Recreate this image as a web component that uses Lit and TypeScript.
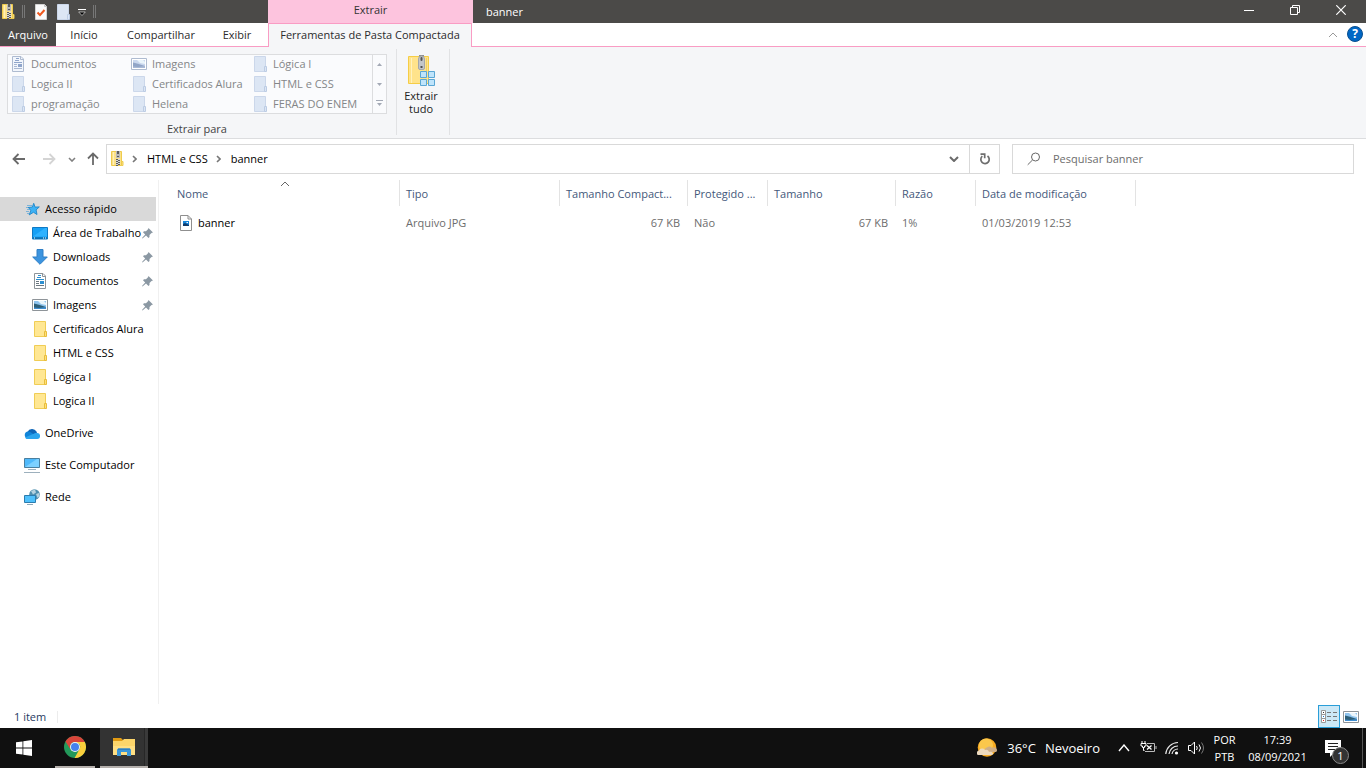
import { LitElement, html, css, svg, nothing, type TemplateResult } from "lit";
import { customElement } from "lit/decorators.js";
import { classMap } from "lit/directives/class-map.js";

/* ---------- icons ---------- */

const zipIcon = html`<svg width="14" height="18" viewBox="0 0 14 18" aria-hidden="true">
  <path d="M1.5 1.5h10v14h-10z" fill="#fbe189" stroke="#eecb4d" />
  <path d="M11.500 11.500h1.500v4h-1.500z" fill="#fbe189" stroke="#eecb4d" />
  <path d="M3.500 2v13" stroke="#fff0b8" />
  <path d="M6 1h4v7H6z" fill="#b9b9b9" />
  <path d="M7 1h2v3H7zM7 6h2v1H7z" fill="#5c5c5c" />
  <path d="M6 9h2v1H6zM8 10h2v1H8zM6 11h2v1H6zM8 12h2v1H8zM6 13h2v1H6zM8 14h2v1H8zM6 15h2v1H6z" fill="#5d5d5d" />
  <path d="M8 9h2v1H8zM6 10h2v1H6zM8 11h2v1H8zM6 12h2v1H6zM8 13h2v1H8zM6 14h2v1H6z" fill="#d8d8d8" />
</svg>`;

const bigZipIcon = html`<svg width="30" height="34" viewBox="0 0 30 34" aria-hidden="true">
  <path d="M2.500 2.500h20v27h-20z" fill="#ffe38b" stroke="#f5cd46" />
  <path d="M5.500 4v25" stroke="#fff2bf" stroke-width="1" />
  <path d="M20.500 4v14" stroke="#f3d064" stroke-width="1" />
  <path d="M13 1h5v3h-5z" fill="#8d8d8d" />
  <path d="M12.500 5a3 3 0 0 1 6 0v9a1.500 1.500 0 0 1-1.500 1.500h-3a1.500 1.500 0 0 1-1.500-1.500z" fill="#c4c6c8" stroke="#a4a7aa" />
  <rect x="14.500" y="3" width="2" height="4" rx="1" fill="#555" />
  <path d="M14.500 12h2v2h-2z" fill="#505050" />
  <g fill="#bfe4fb" stroke="#5ba7d4">
    <path d="M14.500 17.500h6v6h-6zM22.500 17.500h6v6h-6zM14.500 25.500h6v6h-6zM22.500 25.500h6v6h-6z" />
  </g>
</svg>`;

const folderIcon = (faded = false) => html`<svg width="16" height="16" viewBox="0 0 16 16" aria-hidden="true">
  <path d="M2.500 .500h11v15h-11z" fill=${faded ? "#dce6f4" : "#ffe793"} stroke=${faded ? "#cbd7ea" : "#f0cd55"} />
  <path d="M12.500 10.500h2v5h-2z" fill=${faded ? "#dce6f4" : "#ffe07a"} stroke=${faded ? "#bccce4" : "#e8bd3c"} />
</svg>`;

const documentIcon = (faded = false) => {
  const line = faded ? "#a9b8d2" : "#6b7780";
  const accent = faded ? "#8fa5cb" : "#2c8fd0";
  return html`<svg width="16" height="16" viewBox="0 0 16 16" aria-hidden="true">
    <path d="M2.500 .500h8.500l2.500 2.500v12.500h-11z" fill=${faded ? "#f2f6fc" : "#fff"} stroke=${faded ? "#aebbd0" : "#8e9499"} />
    <path d="M10.500 .500v3h3" fill="none" stroke=${faded ? "#aebbd0" : "#8e9499"} />
    <path d="M6 2.500h3M5 4.500h4M4 6.500h8" stroke=${accent} />
    <path d="M4 8.500h3M4 10.500h3M4 12.500h8" stroke=${line} />
    <path d="M8 8h4v3H8z" fill=${accent} />
  </svg>`;
};

const pictureIcon = (faded = false) => html`<svg width="16" height="12" viewBox="0 0 16 12" aria-hidden="true">
  <path d="M.500 .500h15v11H.500z" fill="#fff" stroke=${faded ? "#aebbd0" : "#8e9499"} />
  <path d="M2 2h12v8H2z" fill=${faded ? "#c9d7ee" : "#8fc4ee"} />
  <path d="M6 2h6l2 2v2l-5-1z" fill="#eaf5fc" />
  <path d="M2 4.500l4 1 8 2.500v2H2z" fill=${faded ? "#91a5c7" : "#2d5f78"} />
  <path d="M2 8.500l5 .500 7-1V10H2z" fill=${faded ? "#a9bad7" : "#3f8dd0"} />
</svg>`;

const taskCheckIcon = html`<svg width="13" height="16" viewBox="0 0 13 16" aria-hidden="true">
  <path d="M.500 .500h9l2 2v13H.500z" fill="#fbfbfb" stroke="#d3d3d3" />
  <path d="M9.500 .500v2h2" fill="#e3e3e3" stroke="#c2c2c2" />
  <path d="M2.500 8.500l2.500 2.500L9.500 6" fill="none" stroke="#f0591f" stroke-width="2" />
</svg>`;

const starIcon = html`<svg width="16" height="16" viewBox="0 0 16 16" aria-hidden="true">
  <path d="M3 4.500h5M2 6.500h4M3 8.500h3M2 10.500h3M3 12.500h2" stroke="#7cb3d9" />
  <path d="M9.700 2.300l1.400 3.800 4.200-.200-3.200 3 .9 4.600-3.500-2.200-4.300 2.600 1.700-4.700-2.700-2.700 4.200-.500z" fill="#3db2f5" stroke="#1f86c8" stroke-width=".9" />
</svg>`;

const desktopIcon = html`<svg width="16" height="13" viewBox="0 0 16 13" aria-hidden="true">
  <path d="M.500 .500h15v11.500H.500z" fill="#16a0f5" stroke="#0f79c4" />
  <path d="M1 9.500L13 1h2v8.500z" fill="#2fb2ff" />
  <path d="M1 11h14" stroke="#07588f" />
  <path d="M2 11h1M11 11h1M13 11h1" stroke="#fff" />
</svg>`;

const downloadIcon = html`<svg width="16" height="16" viewBox="0 0 16 16" aria-hidden="true">
  <path d="M5 .500h6v7.500h4.300L8 15.300.700 8H5z" fill="#3c94df" stroke="#2f7fc6" />
</svg>`;

const pinIcon = html`<svg class="pin" width="11" height="11" viewBox="0 0 11 11" aria-hidden="true">
  <path d="M6.500 0L11 4.500l-1.500.500L7.500 7v2l-1 1L4 7.500.500 10.500 0 10l3.200-3.500L1 4.300l1-1h2l2-2z" fill="#8b98a3" />
</svg>`;

const cloudIcon = html`<svg width="16" height="11" viewBox="0 0 16 11" aria-hidden="true">
  <path d="M3.500 4a5 5 0 0 1 9-.500l1 3-9 3z" fill="#0f66b8" />
  <path d="M3.500 10.500a3.600 3.600 0 0 1 0-7c1.500 0 2.500.4 3.500 1L14 9z" fill="#1184d8" />
  <path d="M3 11h10a3 3 0 0 0 .2-6C11.500 4.600 10.500 5.300 9 6L1 9.500c.5.900 1.200 1.500 2 1.500z" fill="#2ba5ee" />
</svg>`;

const computerIcon = html`<svg width="16" height="16" viewBox="0 0 16 16" aria-hidden="true">
  <path d="M.500 1.500h15v9H.500z" fill="#4fb9fb" stroke="#4a7f9f" />
  <path d="M1 10L13 2h2v8z" fill="#7cd0ff" />
  <path d="M4 12.500h8M0 15.500h16" stroke="#9db0bd" />
</svg>`;

const networkIcon = html`<svg width="16" height="16" viewBox="0 0 16 16" aria-hidden="true">
  <circle cx="10.500" cy="5.500" r="5.300" fill="#4f8fae" />
  <path d="M7 2l4-1.500 1 3-3 2zM12 5l3-1 .5 3-2 2z" fill="#b5d2df" />
  <path d="M.500 6.500h11v7H.500z" fill="#4fc0fb" stroke="#2c7cae" />
  <path d="M3 15.500h6" stroke="#8fa9b8" />
</svg>`;

const jpgIcon = html`<svg width="12" height="16" viewBox="0 0 12 16" aria-hidden="true">
  <path d="M.500 .500h7.500l3.500 3.500v11.500H.500z" fill="#fff" stroke="#8f8f8f" />
  <path d="M8 .500V4h3.500" fill="none" stroke="#8f8f8f" />
  <path d="M3 6h6v5H3z" fill="#1583d8" />
  <path d="M3 11V9l2-1 4 2v1z" fill="#123c6b" />
  <path d="M6.500 7h1.500v1H6.500z" fill="#fff" />
</svg>`;

const chevron = (dir: "up" | "down" | "right", w: number, h: number, color: string, stroke = 1) => {
  const d =
    dir === "up" ? `M1 ${h - 1}L${w / 2} 1L${w - 1} ${h - 1}`
    : dir === "down" ? `M1 1L${w / 2} ${h - 1}L${w - 1} 1`
    : `M1 1L${w - 1} ${h / 2}L1 ${h - 1}`;
  return html`<svg width=${w} height=${h} viewBox="0 0 ${w} ${h}" aria-hidden="true">
    <path d=${d} fill="none" stroke=${color} stroke-width=${stroke} />
  </svg>`;
};

const arrow = (color: string, turn: number) => html`<svg width="14" height="14" viewBox="0 0 14 14" aria-hidden="true">
  <path d="M13 7H1.500M6.500 2L1.500 7l5 5" fill="none" stroke=${color} stroke-width="1.800" transform="rotate(${turn} 7 7)" />
</svg>`;

const refreshIcon = html`<svg width="12" height="12" viewBox="0 0 12 12" aria-hidden="true">
  <path d="M8.500 3A4.200 4.200 0 1 1 3.300 3.200" fill="none" stroke="#6e6e6e" stroke-width="1.700" />
  <path d="M1.500 1.200h4.200v4" fill="none" stroke="#6e6e6e" stroke-width="1.700" />
</svg>`;

const searchIcon = html`<svg width="14" height="14" viewBox="0 0 14 14" aria-hidden="true">
  <circle cx="8.500" cy="5" r="4" fill="none" stroke="#666" />
  <path d="M5.500 8L.700 12.800" stroke="#666" />
</svg>`;

const minimizeIcon = html`<svg width="10" height="10" viewBox="0 0 10 10" aria-hidden="true"><path d="M0 5.500h10" stroke="#fff" /></svg>`;
const restoreIcon = html`<svg width="10" height="10" viewBox="0 0 10 10" aria-hidden="true">
  <path d="M.500 2.500h7v7h-7zM2.500 2.500v-2h7v7h-2" fill="none" stroke="#fff" />
</svg>`;
const closeIcon = html`<svg width="10" height="10" viewBox="0 0 10 10" aria-hidden="true"><path d="M.300 .300l9.400 9.400M9.700 .300L.300 9.700" stroke="#fff" stroke-width="1.200" /></svg>`;

const windowsIcon = html`<svg width="16" height="16" viewBox="0 0 16 16" aria-hidden="true">
  <path d="M0 2.300L6.500 1.400v6.200H0zM7.300 1.300L16 0v7.600H7.300zM0 8.400h6.500v6.200L0 13.700zM7.300 8.400H16V16l-8.700-1.300z" fill="#fff" />
</svg>`;

const chromeIcon = html`<svg width="22" height="22" viewBox="0 0 22 22" aria-hidden="true">
  <circle cx="11" cy="11" r="11" fill="#23995a" />
  <path d="M1.470 5.500A11 11 0 0 1 20.800 6H11a5 5 0 0 0-4.700 3.300L5.900 12.500z" fill="#d9453a" />
  <path d="M11 6h9.800A11 11 0 0 1 10.600 22L15.330 13.500A5 5 0 0 0 15.300 8z" fill="#fbcf3c" />
  <circle cx="11" cy="11" r="5" fill="#f4f4f4" />
  <circle cx="11" cy="11" r="4" fill="#4482ee" />
</svg>`;

const explorerIcon = html`<svg width="22" height="18" viewBox="0 0 22 18" aria-hidden="true">
  <path d="M0 0h8l2 2v3H0z" fill="#e09a13" />
  <path d="M0 3h9l2-2h11v16H0z" fill="#fcd56a" />
  <path d="M0 8h22v9H0z" fill="#ffdf83" />
  <path d="M4 18v-6a1.500 1.500 0 0 1 1.500-1.500h11a1.500 1.500 0 0 1 1.500 1.500v6h-4v-4H8v4z" fill="#3b97d9" />
  <path d="M5 10.500h12v1.500H5z" fill="#2f7fc0" />
</svg>`;

const weatherIcon = html`<svg width="20" height="20" viewBox="0 0 20 20" aria-hidden="true">
  <circle cx="10" cy="9.500" r="9.300" fill="#f8ab22" />
  <circle cx="9" cy="7.500" r="7" fill="#fbc74c" />
  <path d="M8 11a2 2 0 0 1 2-1.500 3 3 0 0 1 5 .5 3 3 0 0 1 5 2.500 1.800 1.800 0 0 1-2 1.500H10a2 2 0 0 1-2-3z" fill="#cfae86" />
  <path d="M0 14a2 2 0 0 1 2-1.500 3.500 3.500 0 0 1 6-.5 3 3 0 0 1 4 2c2-.5 3.500 0 4 1.300A1.700 1.700 0 0 1 15 17H2a2 2 0 0 1-2-3z" fill="#ecd9be" />
</svg>`;

const batteryIcon = html`<svg width="17" height="14" viewBox="0 0 17 14" aria-hidden="true">
  <path d="M2 0v3M5 0v3M1 2.500h5v2.500H4.500V6.500h-2V5H1zM3.500 7v2.500h1" fill="none" stroke="#fff" />
  <path d="M7 2.500h7.500v8H5" fill="none" stroke="#bbb" />
  <path d="M16 5v3" stroke="#bbb" />
  <path d="M7 4.500l4.500 4M11.500 4.500l-4.500 4" stroke="#fff" stroke-width="1.300" />
</svg>`;

const wifiIcon = html`<svg width="14" height="14" viewBox="0 0 14 14" aria-hidden="true">
  <path d="M.800 13A12.500 12.500 0 0 1 13 1.500M4 13A9 9 0 0 1 13 5M7 13A6 6 0 0 1 13 8" fill="none" stroke="#e8e8e8" stroke-width="1.200" />
  <circle cx="11.500" cy="12" r="1.600" fill="#fff" />
</svg>`;

const volumeIcon = html`<svg width="17" height="14" viewBox="0 0 17 14" aria-hidden="true">
  <path d="M.500 4.500H3L6.500 1v12L3 9.500H.500z" fill="none" stroke="#fff" />
  <path d="M8.500 5q1.500 2 0 4M11 3.500q3 3.500 0 7" fill="none" stroke="#fff" />
  <path d="M13.500 1.500q4 5.500 0 11" fill="none" stroke="#777" />
</svg>`;

const notificationIcon = html`<svg width="16" height="17" viewBox="0 0 16 17" aria-hidden="true">
  <path d="M0 0h16v13H9l-4 4v-4H0z" fill="#fff" />
  <path d="M3 3.500h10M3 6.500h10M3 9.500h7" stroke="#222" />
</svg>`;

const detailsIcon = html`<svg width="16" height="13" viewBox="0 0 16 13" aria-hidden="true">
  <path d="M.500 .500h4v12h-4zM.500 4.500h4M.500 8.500h4" fill="#fff" stroke="#999" />
  <path d="M2 2h1v1H2z" fill="#333" /><path d="M2 6h1v1H2z" fill="#1773c9" /><path d="M2 10h1v1H2z" fill="#d22" />
  <path d="M6 2.500h4M12 2.500h4M6 6.500h4M12 6.500h4M6 10.500h4M12 10.500h4" stroke="#777" />
</svg>`;

/* ---------- data ---------- */

type Kind = "folder" | "doc" | "pic";
const destinations: [string, Kind][] = [
  ["Documentos", "doc"], ["Imagens", "pic"], ["Lógica I", "folder"],
  ["Logica II", "folder"], ["Certificados Alura", "folder"], ["HTML e CSS", "folder"],
  ["programação", "folder"], ["Helena", "folder"], ["FERAS DO ENEM", "folder"],
];
const fadedIcon = (k: Kind) => (k === "doc" ? documentIcon(true) : k === "pic" ? pictureIcon(true) : folderIcon(true));

interface Place { label: string; icon: TemplateResult; pinned?: boolean }
const quickPlaces: Place[] = [
  { label: "Área de Trabalho", icon: desktopIcon, pinned: true },
  { label: "Downloads", icon: downloadIcon, pinned: true },
  { label: "Documentos", icon: documentIcon(), pinned: true },
  { label: "Imagens", icon: pictureIcon(), pinned: true },
  { label: "Certificados Alura", icon: folderIcon() },
  { label: "HTML e CSS", icon: folderIcon() },
  { label: "Lógica I", icon: folderIcon() },
  { label: "Logica II", icon: folderIcon() },
];
const rootPlaces: Place[] = [
  { label: "OneDrive", icon: cloudIcon },
  { label: "Este Computador", icon: computerIcon },
  { label: "Rede", icon: networkIcon },
];
const columns = ["Nome", "Tipo", "Tamanho Compact...", "Protegido ...", "Tamanho", "Razão", "Data de modificação"];

const base = css`
  :host { display: block; font-family: "Open Sans", "Noto Sans", sans-serif; font-size: 11px; line-height: 16px; color: #000; }
  * { box-sizing: border-box; }
  button { font: inherit; color: inherit; background: none; border: 0; padding: 0; margin: 0; display: flex; align-items: center; justify-content: center; }
  a { color: inherit; text-decoration: none; }
  svg { display: block; flex: none; }
`;

/* ---------- title bar and ribbon ---------- */

@customElement("window-ribbon")
export class WindowRibbon extends LitElement {
  static styles = [base, css`
    .titlebar { display: flex; height: 23px; background: #4b4a48; color: #fff; }
    .quick { width: 268px; display: flex; align-items: center; padding-left: 1px; gap: 7px; }
    .bar { width: 3px; height: 13px; border: 1px solid #777; border-width: 0 1px; }
    .quick .check { margin-left: 3px; }
    .context { width: 205px; background: #fdc4de; color: #333; text-align: center; line-height: 20px; }
    .title { flex: 1; padding-left: 13px; line-height: 24px; font-weight: 400; margin: 0; font-size: 11px; }
    .controls { display: flex; padding-right: 2px; }
    .controls button { width: 46px; padding-bottom: 3px; }
    .tabs { display: flex; height: 24px; background: #fff; border-bottom: 1px solid #f99cc4; color: #2b2b2b; }
    .tabs button { height: 23px; }
    .file { width: 56px; background: #4b4a48; color: #fff; }
    .home { width: 56px; }
    .share { width: 98px; }
    .view { width: 54px; }
    .tabs .tool { width: 204px; height: 24px; margin-left: 4px; background: #f5f6f8; border: 1px solid #f99cc4; border-bottom: 0; padding-bottom: 2px; }
    .spacer { flex: 1; }
    .tabs .collapse { width: 20px; }
    .tabs .help { width: 16px; height: 16px; border-radius: 50%; background: #0067c5; border: 1px solid #0a4f8f; color: #fff; font-weight: 700; font-size: 12px; margin: 3px 3px 0 4px; }
    .ribbon { display: flex; height: 92px; background: #f5f6f8; border-bottom: 1px solid #dcdddf; padding-top: 2px; }
    .group { padding: 5px 9px 0 7px; border-right: 1px solid #e1e2e4; height: 86px; }
    .gallery { display: flex; width: 380px; height: 60px; border: 1px solid #dcdddf; background: #fafbfd; color: #848688; }
    .items { flex: 1; display: grid; grid-template-columns: 121px 121px 1fr; grid-template-rows: repeat(3, 20px); margin-top: -1px; }
    .items button { justify-content: flex-start; gap: 5px; padding-left: 2px; white-space: nowrap; }
    .scroll { width: 14px; display: grid; grid-template-rows: repeat(3, 1fr); border-left: 1px solid #dcdddf; }
    .caption { text-align: center; color: #444; margin-top: 7px; }
    .extract { width: 53px; border-right: 1px solid #e1e2e4; height: 86px; padding-top: 5px; }
    .extract button { flex-direction: column; width: 100%; line-height: 13px; gap: 1px; color: #222; padding-right: 4px; }
  `];

  render() {
    const tri = (up: boolean, line = false) => html`<svg width="7" height="7" viewBox="0 0 7 7" aria-hidden="true">
      ${line ? svg`<path d="M0 .500h7" stroke="#a3a9b5" />` : nothing}
      <path d=${up ? "M1 5L3.500 2L6 5z" : "M1 3L3.500 6L6 3z"} fill="#a3a9b5" />
    </svg>`;
    return html`
      <header class="titlebar">
        <div class="quick">
          ${zipIcon}<span class="bar"></span>
          <button class="check" aria-label="Propriedades">${taskCheckIcon}</button>
          <button aria-label="Nova pasta">${folderIcon(true)}</button>
          <button aria-label="Personalizar">
            <svg width="8" height="8" viewBox="0 0 8 8" aria-hidden="true"><path d="M0 1.500h8" stroke="#fff" /><path d="M.700 4h6.600L4 7.500z" fill="#000" stroke="#ddd" stroke-width=".700" /></svg>
          </button>
          <span class="bar"></span>
        </div>
        <div class="context">Extrair</div>
        <h1 class="title">banner</h1>
        <div class="controls">
          <button aria-label="Minimizar">${minimizeIcon}</button>
          <button aria-label="Restaurar">${restoreIcon}</button>
          <button aria-label="Fechar">${closeIcon}</button>
        </div>
      </header>
      <nav class="tabs">
        <button class="file">Arquivo</button>
        <button class="home">Início</button>
        <button class="share">Compartilhar</button>
        <button class="view">Exibir</button>
        <button class="tool">Ferramentas de Pasta Compactada</button>
        <span class="spacer"></span>
        <button class="collapse" aria-label="Minimizar faixa">${chevron("up", 10, 6, "#999")}</button>
        <button class="help" aria-label="Ajuda">?</button>
      </nav>
      <section class="ribbon">
        <div class="group">
          <div class="gallery">
            <div class="items">
              ${destinations.map(([label, kind]) => html`<button>${fadedIcon(kind)}<span>${label}</span></button>`)}
            </div>
            <div class="scroll">
              <button aria-label="Acima">${tri(true)}</button>
              <button aria-label="Abaixo">${tri(false)}</button>
              <button aria-label="Mais">${tri(false, true)}</button>
            </div>
          </div>
          <div class="caption">Extrair para</div>
        </div>
        <div class="extract"><button>${bigZipIcon}<span>Extrair<br />tudo</span></button></div>
      </section>`;
  }
}

/* ---------- navigation, folder tree and file list ---------- */

@customElement("folder-view")
export class FolderView extends LitElement {
  static styles = [base, css`
    :host { display: flex; flex-direction: column; }
    .address { display: flex; align-items: center; padding: 5px 12px 0; height: 35px; flex: none; }
    .back, .forward, .up { width: 14px; }
    .forward { margin-left: 16px; }
    .recent { margin-left: 12px; width: 8px; }
    .up { margin: 0 6px 0 10px; }
    .path { flex: 1; display: flex; align-items: center; height: 30px; border: 1px solid #d9d9d9; padding-left: 3px; }
    .path a { margin: 0 8px 0 10px; }
    .path .chev { margin-left: 8px; }
    .path .drop { margin-left: auto; width: 30px; }
    .refresh { width: 30px; height: 28px; border-left: 1px solid #d9d9d9; }
    .search { flex: 0 0 342px; display: flex; align-items: center; height: 30px; border: 1px solid #d9d9d9; margin-left: 12px; padding-left: 14px; gap: 12px; }
    .search input { flex: 1; min-width: 0; font: inherit; border: 0; outline: 0; padding: 0; background: none; color: #666; }
    .search input::placeholder { color: #6d6d6d; opacity: 1; }
    .body { flex: 1; display: flex; min-height: 0; margin-top: 6px; }
    .tree { width: 159px; border-right: 1px solid #f0f0f0; padding: 17px 2px 0 0; }
    .place { display: flex; align-items: center; height: 24px; gap: 5px; padding-left: 24px; white-space: nowrap; }
    .place.child { padding-left: 32px; }
    .place.selected { background: #d9d9d9; }
    .place.root { margin-top: 8px; }
    .place .pin { margin-left: auto; margin-right: 3px; }
    .place.child:has(.pin) { gap: 5px; }
    .place span { min-width: 0; flex: 0 1 auto; }
    .list { flex: 1; min-width: 0; }
    table { table-layout: fixed; width: 977px; border-collapse: separate; border-spacing: 0; }
    th, td { text-align: left; font-weight: 400; padding: 0 8px 0 6px; white-space: nowrap; }
    th { height: 26px; border-right: 1px solid #e3e3e3; color: #44587a; padding-top: 2px; }
    td { height: 34px; color: #6d6d6d; }
    .c0 { width: 241px; padding-left: 18px; position: relative; }
    .c1, .c6 { width: 160px; }
    .c2, .c4 { width: 128px; }
    .c3, .c5 { width: 80px; }
    td.num { text-align: right; }
    .file { display: flex; align-items: center; gap: 6px; padding-left: 3px; color: #000; }
    .sort { position: absolute; top: 1px; left: 121px; }
    .status { display: flex; align-items: center; height: 24px; flex: none; padding: 1px 4px 0 14px; color: #1f3a5f; }
    .count { padding-right: 11px; border-right: 1px solid #ececec; line-height: 12px; margin-right: auto; }
    .mode { width: 22px; height: 23px; }
    .mode svg { max-width: 16px; }
    .mode.on { background: #cce8f6; border: 1px solid #2a9ed8; }
  `];

  private place(p: Place, cls: Record<string, boolean>) {
    return html`<a href="#" class=${classMap({ place: true, ...cls })}>${p.icon}<span>${p.label}</span>${p.pinned ? pinIcon : nothing}</a>`;
  }

  render() {
    return html`
      <div class="address">
        <button class="back" aria-label="Voltar">${arrow("#6a6a6a", 0)}</button>
        <button class="forward" aria-label="Avançar">${arrow("#d4d4d4", 180)}</button>
        <button class="recent" aria-label="Locais recentes">${chevron("down", 8, 5, "#808080", 1.6)}</button>
        <button class="up" aria-label="Subir">${arrow("#6a6a6a", 90)}</button>
        <nav class="path">
          ${zipIcon}<span class="chev">${chevron("right", 5, 8, "#777", 1.6)}</span>
          <a href="#">HTML e CSS</a>${chevron("right", 5, 8, "#777", 1.6)}<a href="#">banner</a>
          <button class="drop" aria-label="Histórico">${chevron("down", 10, 6, "#6a6a6a", 2)}</button>
          <button class="refresh" aria-label="Atualizar">${refreshIcon}</button>
        </nav>
        <label class="search">${searchIcon}<input type="text" placeholder="Pesquisar banner" aria-label="Pesquisar banner" /></label>
      </div>
      <div class="body">
        <nav class="tree">
          ${this.place({ label: "Acesso rápido", icon: starIcon }, { selected: true })}
          ${quickPlaces.map((p) => this.place(p, { child: true }))}
          ${rootPlaces.map((p) => this.place(p, { root: true }))}
        </nav>
        <main class="list">
          <table>
            <thead><tr>
              ${columns.map((c, i) => html`<th class="c${i}">${i === 0 ? html`<span class="sort">${chevron("up", 10, 6, "#666")}</span>` : nothing}${c}</th>`)}
            </tr></thead>
            <tbody><tr>
              <td class="c0"><span class="file">${jpgIcon}banner</span></td>
              <td>Arquivo JPG</td><td class="num">67 KB</td><td>Não</td>
              <td class="num">67 KB</td><td>1%</td><td>01/03/2019 12:53</td>
            </tr></tbody>
          </table>
        </main>
      </div>
      <footer class="status">
        <span class="count">1 item</span>
        <button class="mode on" aria-label="Detalhes">${detailsIcon}</button>
        <button class="mode" aria-label="Miniaturas">${pictureIcon()}</button>
      </footer>`;
  }
}

/* ---------- taskbar ---------- */

@customElement("task-bar")
export class TaskBar extends LitElement {
  static styles = [base, css`
    :host { display: flex; height: 40px; background: #101010; color: #fff; }
    .app { width: 48px; height: 40px; }
    .chrome { width: 40px; margin: 0 5px 0 7px; border-bottom: 2px solid #b5b0ac; }
    .explorer { background: linear-gradient(90deg, #333 44px, #272727 44px, #272727 45px, #3a3a3a 45px); border-bottom: 2px solid #b5b0ac; }
    .weather { margin-left: auto; gap: 9px; font-size: 13px; padding-right: 12px; }
    .weather svg { margin-right: 1px; }
    .tray { width: 24px; }
    .lang, .clock { flex-direction: column; font-size: 11px; line-height: 17px; }
    .lang { width: 33px; }
    .clock { width: 73px; }
    .notify { width: 48px; position: relative; padding-right: 10px; }
    .badge { position: absolute; left: 18px; top: 19px; width: 17px; height: 17px; border-radius: 50%; background: #333; border: 1px solid #888; font-size: 11px; line-height: 15px; text-align: center; }
    .peek { width: 4px; border-left: 1px solid #555; }
  `];

  render() {
    return html`
      <button class="app" aria-label="Iniciar">${windowsIcon}</button>
      <button class="app chrome" aria-label="Google Chrome">${chromeIcon}</button>
      <button class="app explorer" aria-label="Explorador de Arquivos">${explorerIcon}</button>
      <button class="weather">${weatherIcon}<span>36°C</span><span>Nevoeiro</span></button>
      <button class="tray" aria-label="Ícones ocultos">${chevron("up", 12, 8, "#fff", 1.4)}</button>
      <button class="tray" aria-label="Bateria">${batteryIcon}</button>
      <button class="tray" aria-label="Rede">${wifiIcon}</button>
      <button class="tray" aria-label="Volume">${volumeIcon}</button>
      <button class="lang"><span>POR</span><span>PTB</span></button>
      <button class="clock"><span>17:39</span><span>08/09/2021</span></button>
      <button class="notify" aria-label="Notificações">${notificationIcon}<span class="badge">1</span></button>
      <button class="peek" aria-label="Mostrar área de trabalho"></button>`;
  }
}

@customElement("app-root")
export class AppRoot extends LitElement {
  static styles = css`
    :host { display: flex; flex-direction: column; height: 100vh; background: #fff; overflow: hidden; }
    .view { flex: 1; min-height: 0; }
  `;

  render() {
    return html`<window-ribbon></window-ribbon><folder-view class="view"></folder-view><task-bar></task-bar>`;
  }
}
